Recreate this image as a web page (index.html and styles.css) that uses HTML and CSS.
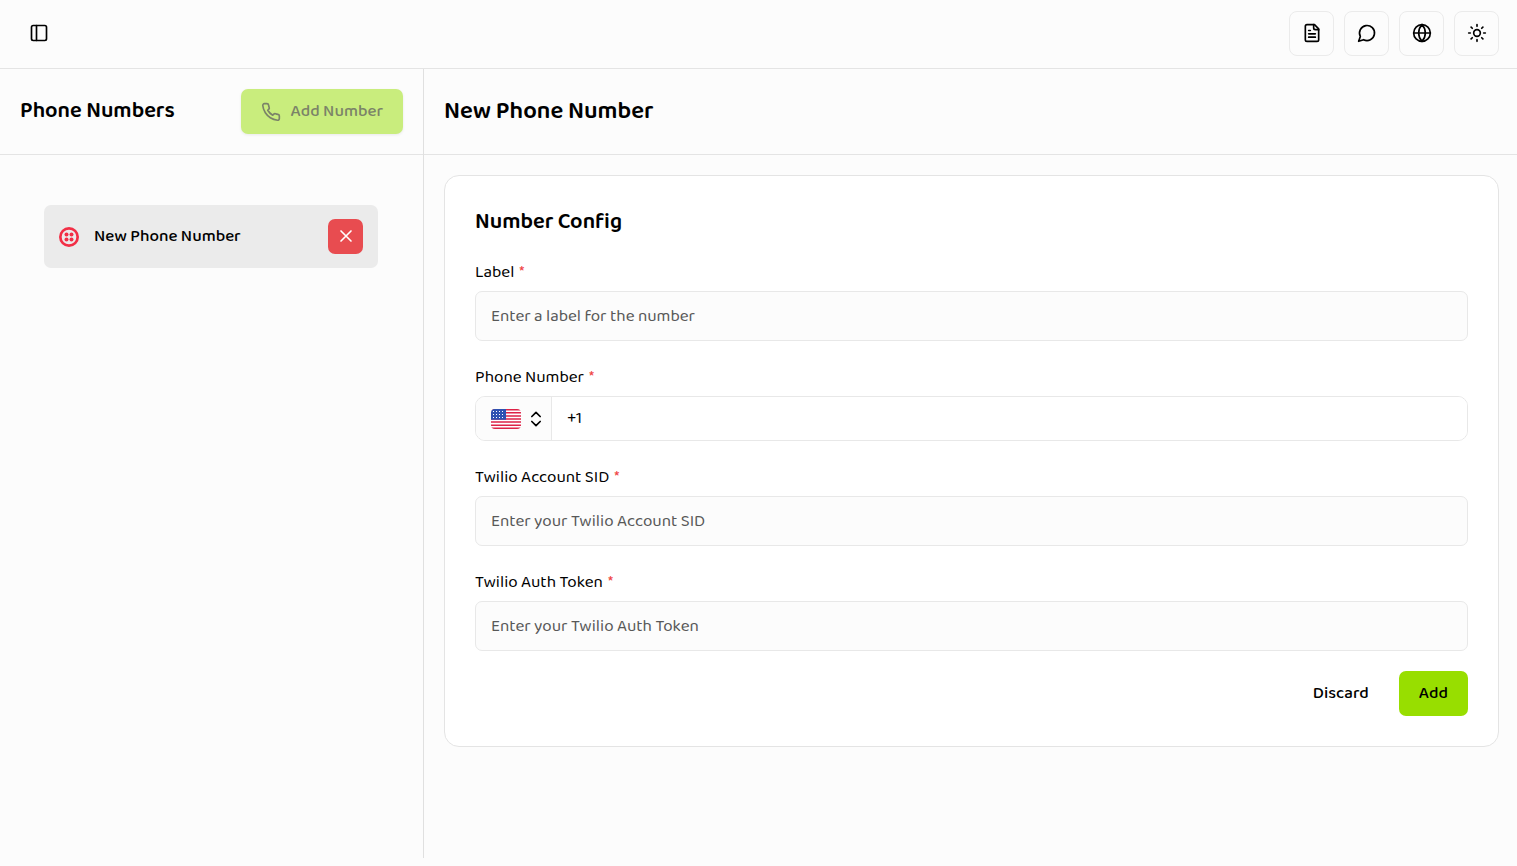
FILE: index.html
```html
<!DOCTYPE html>
<html lang="en">
<head>
<meta charset="utf-8">
<meta name="viewport" content="width=device-width, initial-scale=1">
<title>Phone Numbers</title>
<link rel="stylesheet" href="styles.css">
</head>
<body>
<div class="app">
  <header class="topbar">
    <button class="icon-button" type="button" aria-label="Toggle sidebar">
      <svg class="icon" viewBox="0 0 24 24"><rect x="3" y="3" width="18" height="18" rx="2"/><path d="M9 3v18"/></svg>
    </button>
    <nav class="actions" aria-label="Tools">
      <button class="icon-button outlined" type="button" aria-label="Documentation">
        <svg class="icon" viewBox="0 0 24 24"><path d="M15 2H6a2 2 0 0 0-2 2v16a2 2 0 0 0 2 2h12a2 2 0 0 0 2-2V7Z"/><path d="M14 2v4a2 2 0 0 0 2 2h4"/><path d="M10 9H8M16 13H8M16 17H8"/></svg>
      </button>
      <button class="icon-button outlined" type="button" aria-label="Chat">
        <svg class="icon" viewBox="0 0 24 24"><path d="M7.9 20A9 9 0 1 0 4 16.1L2 22Z"/></svg>
      </button>
      <button class="icon-button outlined" type="button" aria-label="Language">
        <svg class="icon" viewBox="0 0 24 24"><circle cx="12" cy="12" r="10"/><path d="M12 2a14.5 14.5 0 0 0 0 20 14.5 14.5 0 0 0 0-20M2 12h20"/></svg>
      </button>
      <button class="icon-button outlined" type="button" aria-label="Theme">
        <svg class="icon" viewBox="0 0 24 24"><circle cx="12" cy="12" r="4"/><path d="M12 2v2M12 20v2M4.93 4.93l1.41 1.41M17.66 17.66l1.41 1.41M2 12h2M20 12h2M6.34 17.66l-1.41 1.41M19.07 4.93l-1.41 1.41"/></svg>
      </button>
    </nav>
  </header>

  <div class="workspace">
    <aside class="sidebar">
      <div class="pane-header">
        <h2 class="pane-title small">Phone Numbers</h2>
        <button class="button add-number" type="button" disabled>
          <svg class="icon" viewBox="0 0 24 24"><path d="M22 16.92v3a2 2 0 0 1-2.18 2 19.79 19.79 0 0 1-8.63-3.07 19.5 19.5 0 0 1-6-6 19.79 19.79 0 0 1-3.07-8.67A2 2 0 0 1 4.11 2h3a2 2 0 0 1 2 1.72 12.84 12.84 0 0 0 .7 2.81 2 2 0 0 1-.45 2.11L8.09 9.91a16 16 0 0 0 6 6l1.27-1.27a2 2 0 0 1 2.11-.45 12.84 12.84 0 0 0 2.81.7A2 2 0 0 1 22 16.92z"/></svg>
          Add Number
        </button>
      </div>
      <ul class="numbers">
        <li class="number">
          <svg class="provider" viewBox="0 0 24 24" aria-hidden="true"><path fill-rule="evenodd" d="M12 0a12 12 0 1 0 0 24 12 12 0 0 0 0-24Zm0 3.2a8.8 8.8 0 1 1 0 17.6 8.8 8.8 0 0 1 0-17.6Z"/><circle cx="9" cy="9" r="2.4"/><circle cx="15" cy="9" r="2.4"/><circle cx="9" cy="15" r="2.4"/><circle cx="15" cy="15" r="2.4"/></svg>
          <span class="number-name">New Phone Number</span>
          <button class="remove" type="button" aria-label="Remove number">
            <svg class="icon" viewBox="0 0 24 24"><path d="M18 6 6 18M6 6l12 12"/></svg>
          </button>
        </li>
      </ul>
    </aside>

    <main class="detail">
      <div class="pane-header">
        <h1 class="pane-title">New Phone Number</h1>
      </div>
      <form class="card">
        <h2 class="card-title">Number Config</h2>
        <div class="field">
          <label class="label" for="label">Label <span class="required">*</span></label>
          <input class="input" id="label" type="text" placeholder="Enter a label for the number">
        </div>
        <div class="field">
          <label class="label" for="phone">Phone Number <span class="required">*</span></label>
          <div class="phone">
            <button class="country" type="button" aria-label="Country: United States">
              <svg class="flag" viewBox="0 0 30 20" aria-hidden="true">
                <path fill="#fff" d="M0 0h30v20H0z"/>
                <path fill="#dd2247" d="M0 0h30v1.54H0zM0 3.08h30v1.54H0zM0 6.15h30v1.54H0zM0 9.23h30v1.54H0zM0 12.31h30v1.54H0zM0 15.38h30v1.54H0zM0 18.46h30V20H0z"/>
                <path fill="#2e52b2" d="M0 0h15v10.8H0z"/>
                <path class="stars" d="M2 2.5h12M2 5.5h12M2 8.5h12"/>
              </svg>
              <svg class="icon chevrons" viewBox="0 0 24 24"><path d="m7 15 5 5 5-5M7 9l5-5 5 5"/></svg>
            </button>
            <input class="phone-input" id="phone" type="tel" value="+1">
          </div>
        </div>
        <div class="field">
          <label class="label" for="sid">Twilio Account SID <span class="required">*</span></label>
          <input class="input" id="sid" type="text" placeholder="Enter your Twilio Account SID">
        </div>
        <div class="field">
          <label class="label" for="token">Twilio Auth Token <span class="required">*</span></label>
          <input class="input" id="token" type="text" placeholder="Enter your Twilio Auth Token">
        </div>
        <div class="form-actions">
          <button class="button" type="button">Discard</button>
          <button class="button primary" type="submit">Add</button>
        </div>
      </form>
    </main>
  </div>
</div>
</body>
</html>
```
FILE: styles.css
```css
* {
  box-sizing: border-box;
}

body {
  margin: 0;
  background: #fcfcfc;
  color: #000;
  font-family: "Baloo 2", "Noto Sans", sans-serif;
  font-size: 17px;
  line-height: 20px;
}

button,
input {
  font: inherit;
  color: inherit;
}

button {
  border: 0;
  padding: 0;
  background: none;
}

h1,
h2,
ul {
  margin: 0;
  padding: 0;
}

.app {
  display: flex;
  flex-direction: column;
  min-height: 100vh;
  padding-bottom: 8px;
}

.icon {
  width: 20px;
  height: 20px;
  flex: none;
  fill: none;
  stroke: currentColor;
  stroke-width: 2;
  stroke-linecap: round;
  stroke-linejoin: round;
}

.topbar {
  display: flex;
  align-items: center;
  justify-content: space-between;
  padding: 11px 18px 12px 16px;
  border-bottom: 1px solid #e4e4e4;
}

.actions {
  display: flex;
  gap: 10px;
}

.icon-button {
  display: flex;
  align-items: center;
  justify-content: center;
  width: 45px;
  height: 45px;
  padding-bottom: 1px;
  border-radius: 8px;
}

.outlined {
  border: 1px solid #ebebeb;
}

.workspace {
  flex: 1;
  display: flex;
}

.sidebar {
  width: 424px;
  flex: none;
  border-right: 1px solid #e0e0e0;
}

.detail {
  flex: 1;
  min-width: 0;
}

.pane-header {
  display: flex;
  align-items: center;
  justify-content: space-between;
  height: 86px;
  padding: 0 20px;
  border-bottom: 1px solid #e4e4e4;
}

.pane-title {
  font-size: 24px;
  font-weight: 600;
  line-height: 30px;
}

.pane-title.small {
  padding-bottom: 2px;
  font-size: 22px;
}

.button {
  display: flex;
  align-items: center;
  gap: 10px;
  height: 45px;
  padding: 0 20px;
  border-radius: 7px;
  font-weight: 500;
}

.primary {
  background: #98de00;
}

.add-number {
  background: #c9ed7d;
  color: #7b8368;
  box-shadow: 0 1px 3px rgba(0, 0, 0, 0.08);
}

.numbers {
  list-style: none;
  padding: 50px 45px 0 44px;
}

.number {
  display: flex;
  align-items: center;
  gap: 15px;
  padding: 14px 15px;
  border-radius: 7px;
  background: #ebebeb;
}

.provider {
  width: 20px;
  height: 20px;
  fill: #f22f46;
}

.number-name {
  flex: 1;
  font-weight: 500;
}

.remove {
  display: flex;
  align-items: center;
  justify-content: center;
  width: 35px;
  height: 35px;
  padding-bottom: 1px;
  border-radius: 7px;
  background: #e84c50;
  color: #fff;
}

.card {
  display: flex;
  flex-direction: column;
  gap: 22px;
  margin: 20px 18px 20px 20px;
  padding: 30px;
  border: 1px solid #e4e4e4;
  border-radius: 15px;
  background: #fff;
}

.card-title {
  font-size: 22px;
  font-weight: 600;
  line-height: 33px;
}

.field {
  display: flex;
  flex-direction: column;
  gap: 6px;
}

.label {
  display: flex;
  gap: 5px;
  line-height: 24px;
}

.field + .field {
  margin-top: 3px;
}

.required {
  color: #ef4444;
}

.input {
  width: 100%;
  height: 50px;
  padding: 0 15px;
  border: 1px solid #e8e8e8;
  border-radius: 7px;
  background: #fcfcfc;
}

.input::placeholder {
  color: #585858;
  opacity: 1;
}

.phone {
  display: flex;
  height: 45px;
  border: 1px solid #e8e8e8;
  border-radius: 10px;
  overflow: hidden;
}

.country {
  display: flex;
  align-items: center;
  gap: 5px;
  padding: 0 5px 0 15px;
  border-right: 1px solid #e8e8e8;
  background: #fcfcfc;
}

.flag {
  width: 30px;
  height: 20px;
  border-radius: 4px;
}

.stars {
  fill: none;
  stroke: #fff;
  stroke-width: 1;
  stroke-dasharray: 1 2;
}

.phone-input {
  flex: 1;
  min-width: 0;
  padding: 0 15px;
  border: 0;
  background: #fff;
}

.form-actions {
  display: flex;
  justify-content: flex-end;
  gap: 10px;
  margin-top: -2px;
}
```
